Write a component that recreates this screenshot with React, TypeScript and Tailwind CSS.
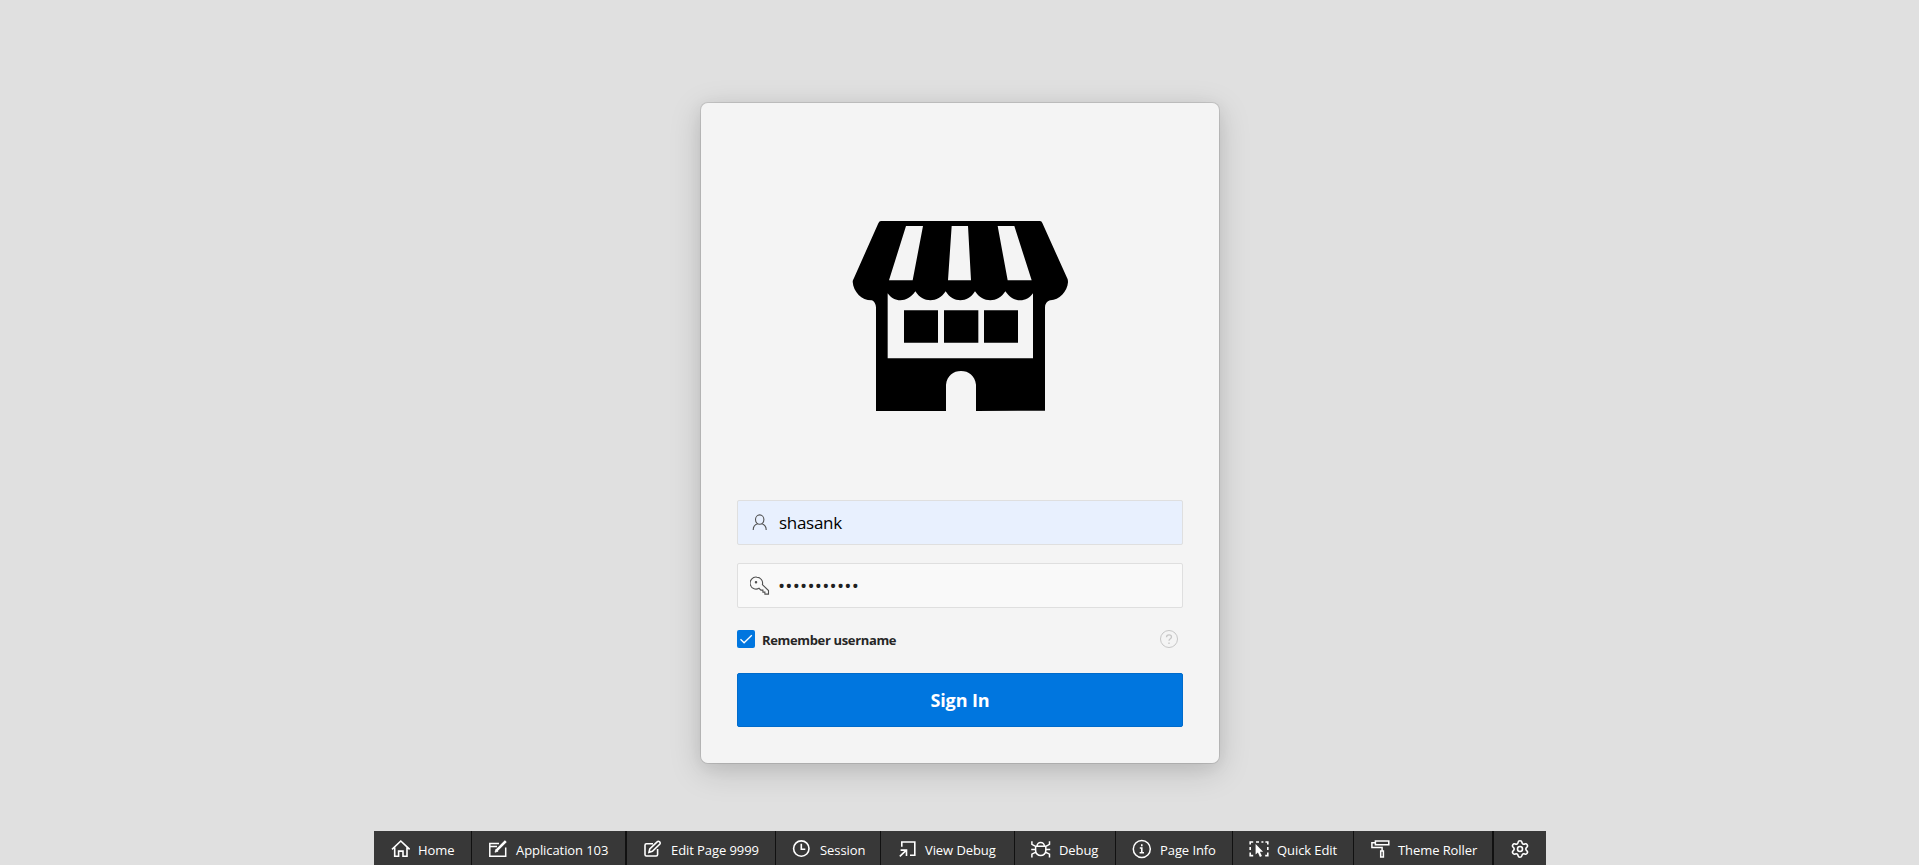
import type { ReactNode } from "react";
import { Settings } from "lucide-react";

function Icon({ children }: { children: ReactNode }) {
  return (
    <svg width="20" height="20" viewBox="0 0 20 20" fill="none" stroke="currentColor" strokeWidth="1.6" className="shrink-0">
      {children}
    </svg>
  );
}

const tools: { label: string; width: string; icon: ReactNode }[] = [
  {
    label: "Home",
    width: "w-[98px] border-r",
    icon: <path d="M2 10.3 10.8 2l8.8 8.3M4.7 8.6v8.7h3.9v-5.2h4.4v5.2h4V8.6" />,
  },
  {
    label: "Application 103",
    width: "w-[155px] border-r-2",
    icon: (
      <>
        <path d="M11 4.6H1.8v12.7h15.9V8.6M1.8 7.4H9" strokeWidth="1.5" />
        <path d="M17.8 2.2 8.6 11.4" strokeWidth="2.6" />
        <path d="m7 13.2 1-3 2 2z" fill="currentColor" strokeWidth="0.8" />
      </>
    ),
  },
  {
    label: "Edit Page 9999",
    width: "w-[149px] border-r",
    icon: (
      <path d="M10 4.8H3.4a1.4 1.4 0 0 0-1.4 1.4v9.4A1.4 1.4 0 0 0 3.4 17h9.8a1.4 1.4 0 0 0 1.4-1.4V10M6 13.3l.8-3.4 7.3-7a1.7 1.7 0 0 1 2.6 2.4l-7.3 7z" />
    ),
  },
  {
    label: "Session",
    width: "w-[105px] border-r",
    icon: (
      <>
        <circle cx="9.3" cy="9.6" r="7.7" />
        <path d="M9.3 4.8v5.4h4" />
      </>
    ),
  },
  {
    label: "View Debug",
    width: "w-[134px] border-r",
    icon: <path d="M4.8 7.8V3h13v13.2H13M2.8 17.4l6.6-6.3M3.6 11.1h5.9v5.8" />,
  },
  {
    label: "Debug",
    width: "w-[101px] border-r",
    icon: (
      <path d="M4.6 7.3h10.2v4.2a5.1 5.1 0 0 1-10.2 0zM6 7.2a3.7 3.7 0 0 1 7.4 0M.9 2.2v3.2l3.7 2M18.5 2.2v3.2l-3.7 2M.2 10.5h4.4M14.8 10.5h4.4M.9 18.4v-3.2l3.9-2M18.5 18.4v-3.2l-3.9-2" strokeWidth="1.5" />
    ),
  },
  {
    label: "Page Info",
    width: "w-[117px] border-r",
    icon: (
      <>
        <circle cx="9.8" cy="10" r="8.5" strokeWidth="1.5" />
        <path d="M9.8 5.2v2M7.8 9h2v4.8M7.6 13.8H12" />
      </>
    ),
  },
  {
    label: "Quick Edit",
    width: "w-[121px] border-r",
    icon: (
      <>
        <path d="M1.2 5.6V3h3M7 3h3M12.4 3h2M16.4 3h2.4v2.6M18.8 8v3M18.8 13.6v3h-2.6M1.2 8v3M1.2 13.6v3h3" />
        <path d="M6.6 5v10.4l2.3-2 2 4.6 2-.9-2-4.4h3.2z" fill="currentColor" stroke="none" />
      </>
    ),
  },
  {
    label: "Theme Roller",
    width: "w-[140px] border-r-2",
    icon: <path d="M5.4 2h13.4v3.8H5.4zM5.4 3.8H1.9v4.8h10.2v3.2M10.7 12.1h2.7v6h-2.7z" strokeWidth="1.5" />,
  },
];

function StoreLogo() {
  return (
    <svg width="240" height="210" viewBox="0 0 720 630" className="mx-auto block">
      <path
        fill="#000"
        fillRule="evenodd"
        d="M123 33H600Q605 33 607 39L683 208Q684 212 684 217C682 246 656 272 630 271Q616 275 615 292V602L408 603V524C405 497 386 483 363 483S321 497 318 524V603H108V292Q106 275 96 271C66 272 40 246 38 215Q38 211 41 206L115 40Q118 33 123 33Z
        M198 48H249L218 211H147Z M335 48H384L393 211H324Z M473 48H523L575 211H503Z
        M143 250V445H579V250C560 278 520 280 496 244C474 280 428 280 405 244C384 280 338 280 317 244C294 280 248 280 226 244C202 280 162 278 143 250Z
        M192 301H294V398H192Z M312 301H415V398H312Z M432 301H534V398H432Z"
      />
    </svg>
  );
}

export default function App() {
  return (
    <div className="flex h-screen min-h-[865px] flex-col justify-between overflow-hidden bg-[#e0e0e0] font-['Open_Sans',sans-serif]">
      <main className="flex justify-center pt-[102px] pl-px">
        <form className="h-[662px] w-[520px] rounded-[8px] border border-black/10 bg-[#f4f4f4] bg-clip-padding px-[36px] pt-[107px] shadow-[0_8px_32px_rgba(0,0,0,0.15),0_4px_16px_rgba(0,0,0,0.06)]">
          <StoreLogo />
          <div className="mt-[80px] flex h-[45px] items-center rounded-[2px] border border-[#dfdfdf] bg-[#e8f0fe] pl-[12px]">
            <svg width="20" height="20" viewBox="0 0 20 20" fill="none" stroke="#505050" strokeWidth="1.1">
              <ellipse cx="9.700" cy="6.600" rx="4.200" ry="4.700" />
              <path d="M7.600 10.800C4.600 11.700 3.200 13.500 3.200 17M11.800 10.800c3 .9 4.400 2.700 4.400 6.200" />
            </svg>
            <span className="ml-[9px] text-[17px] leading-[24px] tracking-[-0.3px] text-black">shasank</span>
          </div>
          <div className="mt-[18px] flex h-[45px] items-center rounded-[2px] border border-[#dfdfdf] bg-[#f9f9f9] pl-[12px]">
            <svg width="20" height="20" viewBox="0 0 20 20" fill="none" stroke="#505050" strokeWidth="1.1">
              <path d="M6.700 1.100a6 6 0 0 1 5.700 7.500l6.100 6v3.500h-3.600v-2h-2v-2h-2l-1.900-1.800A6 6 0 1 1 6.700 1.100z" />
              <circle cx="6" cy="6.300" r=".7" fill="#505050" />
            </svg>
            <span className="ml-[8px] text-[19px] leading-[24px] tracking-[0.22px] text-[#202020]">•••••••••••</span>
          </div>
          <div className="mt-[22px] flex h-[18px] items-center">
            <span className="flex size-[18px] items-center justify-center rounded-[2px] bg-[#0076df]">
              <svg width="18" height="18" viewBox="0 0 18 18" fill="none" stroke="#fff" strokeWidth="1.3">
                <path d="m3.500 9.200 3.600 3.600 7.700-7.600" />
              </svg>
            </span>
            <span className="ml-[7px] pt-[2px] text-[13px] leading-[18px] font-bold tracking-[-0.35px] text-[#262626]">Remember username</span>
            <svg width="18" height="18" viewBox="0 0 18 18" fill="none" stroke="#c6c6c6" className="mr-[5px] ml-auto">
              <circle cx="9" cy="9" r="8.500" />
              <path d="M6.500 7.200C6.500 5.700 7.500 4.900 9 4.900s2.500.8 2.500 2.100c0 1.800-2.500 1.800-2.500 3.800M9 12.500v1.500" strokeWidth="1.300" />
            </svg>
          </div>
          <button type="button" className="mt-[25px] block h-[54px] w-full rounded-[2px] border border-[#006bcb] bg-[#0076df] text-[18px] leading-[24px] font-bold tracking-[-0.1px] text-white">
            Sign In
          </button>
        </form>
      </main>
      <nav className="flex justify-center pl-px">
        {tools.map((t) => (
          <a key={t.label} className={`flex h-[34px] shrink-0 items-center border-[#111] bg-[#383838] pt-[2px] pl-[16px] text-white ${t.width}`}>
            <Icon>{t.icon}</Icon>
            <span className="ml-[8px] pt-[2px] text-[13px] leading-[18px] tracking-[-0.08px] whitespace-nowrap">{t.label}</span>
          </a>
        ))}
        <a className="flex h-[34px] w-[52px] shrink-0 items-center bg-[#383838] pt-[2px] pl-[16px] text-white">
          <Settings size={20} strokeWidth={1.9} />
        </a>
      </nav>
    </div>
  );
}
